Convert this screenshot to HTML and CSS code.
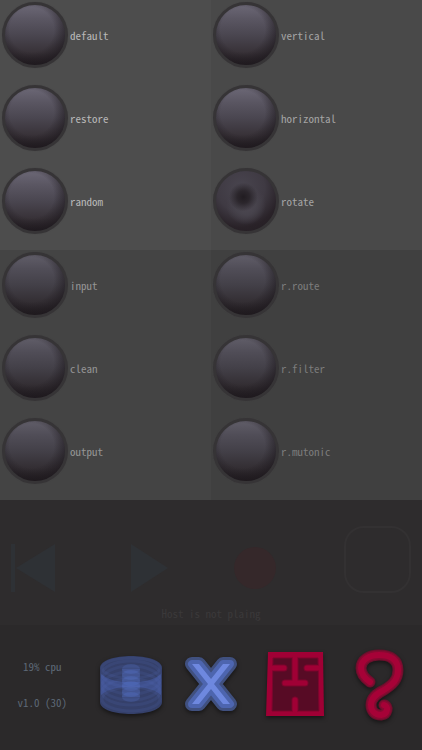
FILE: index.html
```
<!DOCTYPE html>
<html lang="en">
<head>
    <meta charset="utf-8">
    <meta name="viewport" content="width=device-width, initial-scale=1">
    <title>Settings</title>
    <link rel="stylesheet" href="styles.css">
</head>
<body>
    <main class="panels">
        <section class="panel panel-a">
            <button class="option"><span class="knob"></span>default</button>
            <button class="option"><span class="knob"></span>restore</button>
            <button class="option"><span class="knob"></span>random</button>
        </section>
        <section class="panel panel-b">
            <button class="option"><span class="knob"></span>vertical</button>
            <button class="option"><span class="knob"></span>horizontal</button>
            <button class="option"><span class="knob pressed"></span>rotate</button>
        </section>
        <section class="panel panel-c">
            <button class="option"><span class="knob"></span>input</button>
            <button class="option"><span class="knob"></span>clean</button>
            <button class="option"><span class="knob"></span>output</button>
        </section>
        <section class="panel panel-d">
            <button class="option"><span class="knob"></span>r.route</button>
            <button class="option"><span class="knob"></span>r.filter</button>
            <button class="option"><span class="knob"></span>r.mutonic</button>
        </section>
    </main>

    <section class="transport">
        <div class="transport-buttons">
            <button class="icon-button" aria-label="Rewind">
                <svg width="44" height="50" viewBox="0 0 44 50" fill="#2e3135">
                    <path d="M0 1h4v48H0zM44 1v48L5 25z"/>
                </svg>
            </button>
            <button class="icon-button" aria-label="Play">
                <svg width="47" height="50" viewBox="0 0 47 50" fill="#2e3135">
                    <path d="M10 1v48l37-24z"/>
                </svg>
            </button>
            <button class="icon-button" aria-label="Record">
                <svg width="44" height="50" viewBox="0 0 44 50">
                    <circle cx="21" cy="25" r="21" fill="#35282a"/>
                </svg>
            </button>
            <button class="host" aria-label="Host"></button>
        </div>
        <p class="status">Host is not plaing</p>
    </section>

    <footer class="footer">
        <div class="info">
            <span>19% cpu</span>
            <span>v1.0 (30)</span>
        </div>
        <button class="icon-button" aria-label="Drum">
            <svg class="shadow" width="84" height="125" viewBox="85 625 84 125">
                <path d="M100 668c0-16 62-16 62 0v34c0 16-62 16-62 0z" fill="#35406a"/>
                <path d="M101 674c8 7 18 8 30 8s22-1 30-8v21c-8-7-18-8-30-8s-22 1-30 8z" fill="#465ca4" opacity=".6"/>
                <g fill="none" stroke="#5b76c9" stroke-opacity=".12" stroke-width="3">
                    <ellipse cx="131" cy="668" rx="29" ry="10"/>
                    <ellipse cx="131" cy="674" rx="29" ry="13"/>
                    <ellipse cx="131" cy="680" rx="29" ry="14"/>
                    <ellipse cx="131" cy="686" rx="29" ry="14"/>
                    <ellipse cx="131" cy="692" rx="29" ry="13"/>
                    <ellipse cx="131" cy="699" rx="29" ry="12"/>
                </g>
                <g fill="#5874cd" fill-opacity=".24">
                    <ellipse cx="131" cy="669" rx="9" ry="5"/>
                    <ellipse cx="131" cy="675" rx="9" ry="5"/>
                    <ellipse cx="131" cy="681" rx="9" ry="5"/>
                    <ellipse cx="131" cy="686" rx="9" ry="5"/>
                    <ellipse cx="131" cy="692" rx="9" ry="5"/>
                    <ellipse cx="131" cy="697" rx="9" ry="5"/>
                    <rect x="122" y="669" width="18" height="28"/>
                </g>
            </svg>
        </button>
        <button class="icon-button" aria-label="Close">
            <svg class="shadow" width="84" height="125" viewBox="169 625 84 125" stroke-linejoin="round">
                <path d="M192 664h7l12 15 12-15h7l-16 20 16 20h-7l-12-15-12 15h-7l16-20z" fill="#40507f" stroke="#40507f" stroke-width="14"/>
                <path d="M192 664h7l12 15 12-15h7l-16 20 16 20h-7l-12-15-12 15h-7l16-20z" fill="#4d65af" stroke="#4d65af" stroke-width="8"/>
                <path d="M192 664h7l12 15 12-15h7l-16 20 16 20h-7l-12-15-12 15h-7l16-20z" fill="#6e88df"/>
            </svg>
        </button>
        <button class="icon-button" aria-label="Rooms">
            <svg class="shadow" width="84" height="125" viewBox="252 625 84 125">
                <path d="M267 652h55l1 64h-58z" fill="#a00035"/>
                <path d="M272 658h45l1 53h-47z" fill="#570b25" stroke="#7c052d"/>
                <path d="M294 660v23M284 683h20M274 668h9M315 668h-9M294 709v-9" fill="none" stroke="#7c052d" stroke-width="7" stroke-linecap="round"/>
                <path d="M294 656v27M284 683h20M270 668h13M319 668h-13M294 712v-12" fill="none" stroke="#a00035" stroke-width="5" stroke-linecap="round"/>
            </svg>
        </button>
        <button class="icon-button" aria-label="Help">
            <svg class="shadow" width="84" height="125" viewBox="338 625 84 125" fill="none" stroke-linecap="round">
                <path d="M370 682C363 677 361 673 361 668C361 660 369 655 379 655C391 655 398 660 398 670C398 680 392 685 384 690C376 694 371 698 371 705C371 711 375 715 381 715C388 714 389 706 384 705" stroke="#69102c" stroke-width="11"/>
                <path d="M370 682C363 677 361 673 361 668C361 660 369 655 379 655C391 655 398 660 398 670C398 680 392 685 384 690C376 694 371 698 371 705C371 711 375 715 381 715C388 714 389 706 384 705" stroke="#850a31" stroke-width="9"/>
                <path d="M370 682C363 677 361 673 361 668C361 660 369 655 379 655C391 655 398 660 398 670C398 680 392 685 384 690C376 694 371 698 371 705C371 711 375 715 381 715C388 714 389 706 384 705" stroke="#a60237" stroke-width="6"/>
            </svg>
        </button>
    </footer>
</body>
</html>
```

FILE: styles.css
```
* {
    box-sizing: border-box;
}

body {
    margin: 0;
    min-height: 100vh;
    display: grid;
    grid-template-rows: 4fr 1fr 1fr;
    background-color: #2b292a;
    font-family: "Noto Sans Mono CJK SC", "Liberation Mono", monospace;
    font-size: 11px;
    line-height: 16px;
}

button {
    margin: 0;
    padding: 0;
    border: none;
    background: none;
    color: inherit;
    font: inherit;
    cursor: pointer;
}

svg {
    display: block;
}

.panels {
    display: grid;
    grid-template-columns: 1fr 1fr;
    grid-template-rows: 1fr 1fr;
}

.panel {
    display: grid;
    grid-template-rows: 1fr 1fr 1fr;
}

.panel-a {
    background-color: #4d4d4d;
    color: #b8b8b8;
}

.panel-b {
    background-color: #494949;
    color: #a4a4a4;
}

.panel-c {
    background-color: #444444;
    color: #949494;
}

.panel-d {
    background-color: #404040;
    color: #7c7c7c;
}

.option {
    display: flex;
    align-items: center;
    gap: 2px;
    padding: 0 2px 14px;
    text-align: left;
}

.knob {
    width: 66px;
    height: 66px;
    border: 3px solid #363436;
    border-radius: 50%;
    background:
        radial-gradient(circle at 45% 42%, rgba(30, 25, 30, 0) 42%, rgba(30, 25, 30, 0.85) 74%),
        linear-gradient(#6a6674 6%, #5a5662 26%, #4a4650 50%, #383238 76%, #231d22 94%);
    background-origin: border-box;
    box-shadow: 0 0 1px #424142;
}

.panel-c .knob,
.panel-d .knob {
    background-image:
        radial-gradient(circle at 45% 42%, rgba(30, 25, 30, 0) 42%, rgba(30, 25, 30, 0.85) 74%),
        linear-gradient(#5f5c67 6%, #504d57 26%, #434048 50%, #332e33 76%, #211c20 94%);
}

.knob.pressed {
    background-image:
        radial-gradient(circle at 46% 44%, #211c21 0%, #2b262c 12%, rgba(62, 57, 66, 0) 28%),
        radial-gradient(circle at 50% 56%, #4e4953 0%, #47434c 20%, rgba(61, 56, 65, 0) 40%),
        radial-gradient(circle at 42% 30%, #49454f 0%, #3f3a43 40%, #292228 66%, #211b20 100%);
}

.transport {
    display: flex;
    flex-direction: column;
    justify-content: flex-end;
    background-color: #2e2c2d;
}

.transport-buttons {
    display: flex;
    justify-content: space-between;
    align-items: flex-end;
    padding: 0 11px;
}

.host {
    width: 67px;
    height: 67px;
    border: 2px solid #333132;
    border-radius: 20px;
}

.status {
    margin: 12px 0 4px;
    color: #3b393a;
    text-align: center;
}

.footer {
    display: grid;
    grid-template-columns: repeat(5, 1fr);
    align-items: center;
}

.info {
    display: flex;
    flex-direction: column;
    align-items: center;
    gap: 20px;
    padding-bottom: 8px;
    color: #5d6876;
}

.icon-button {
    display: flex;
    justify-content: center;
}

.shadow {
    filter: drop-shadow(0 2px 2px rgba(0, 0, 0, 0.5));
}
```
